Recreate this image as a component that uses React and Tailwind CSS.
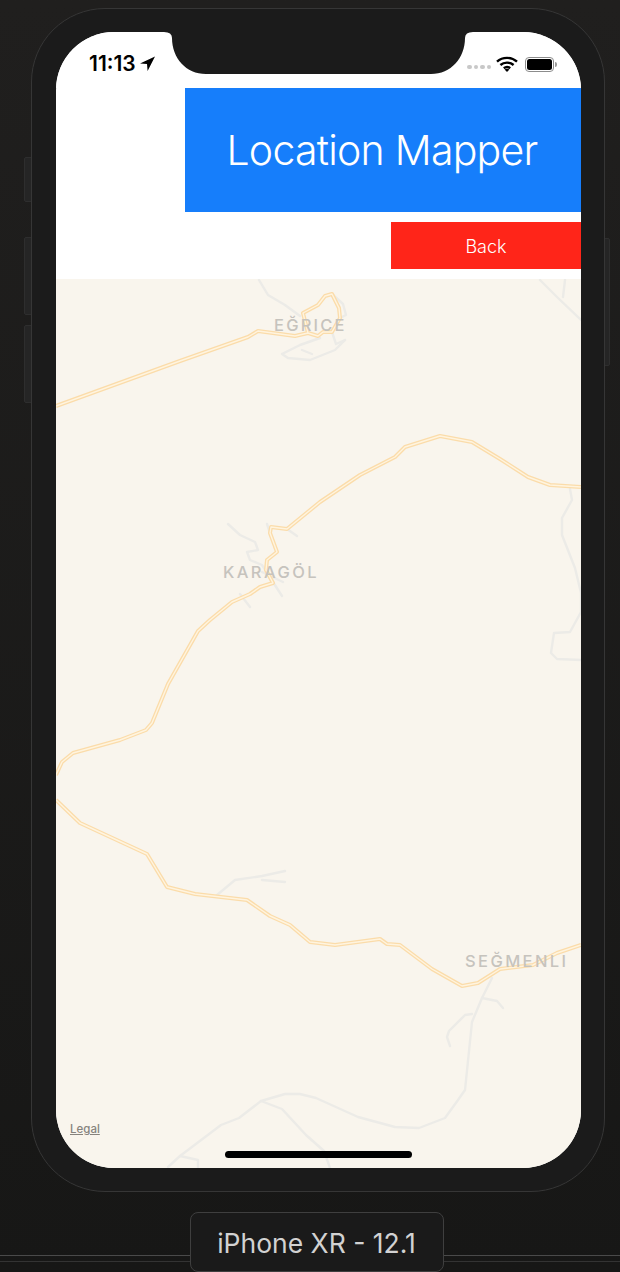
import React from 'react';

const font = { fontFamily: 'Inter, "Noto Sans", sans-serif' };

const mainRoads = [
  'M56 406L180 361L248 337L258 331L295 336L308 333L318 336L323 332L332 332L340 318L339 308L332 294L325 296L318 305L303 313L308 333',
  'M581 487L550 485L528 477L500 459L472 442L440 436L405 447L395 457L360 475L320 502L287 529L271 527L270 533L277 552L267 560L266 570L273 583L260 587L250 594L232 602L210 620L198 631L168 684L152 723L146 730L120 740L73 753L62 762L56 775',
  'M56 800L80 823L147 854L167 887L195 894L247 900L270 916L290 925L310 942L335 945L380 939L387 944L400 945L432 969L462 986L478 983L500 969L533 965L557 953L581 945',
];

const minorRoads = [
  'M259 280L268 295L285 305L300 316',
  'M332 294L343 304L346 315L340 318',
  'M332 332L336 344L345 340',
  'M282 354L300 345L320 338M282 354L288 358L310 360L335 350L345 340M302 350L312 354',
  'M228 524L240 535L255 542L258 550L247 552L250 560L262 565L282 596',
  'M267 524L270 533M287 529L297 536',
  'M240 594L250 607M262 572L283 582',
  'M492 978L482 998L472 1022L465 1090L458 1100L445 1118L419 1128L395 1127L358 1117L316 1098L300 1094L285 1094L261 1101L239 1118L221 1125L180 1156L168 1167',
  'M180 1156L198 1160L198 1168',
  'M261 1101L282 1109L306 1135L324 1151L330 1168',
  'M482 998L497 1001L503 1008',
  'M472 1014L465 1015L449 1031L447 1037L450 1046',
  'M570 489L572 500L562 518L562 535L575 568L581 593L581 612L570 632L554 633L551 653L557 659L581 660',
  'M540 280L557 297L581 320',
  'M565 280L563 297',
  'M217 895L235 880L262 876L285 871M262 880L285 882',
];

function MapCanvas() {
  return (
    <svg className="absolute inset-0 h-full w-full" viewBox="56 279 525 889" fill="none">
      {minorRoads.map((d) => (
        <path key={d} d={d} stroke="#ecebe7" strokeWidth="2.4" strokeLinejoin="round" strokeLinecap="round" />
      ))}
      {mainRoads.map((d) => (
        <path key={d} d={d} stroke="#fbdcaa" strokeWidth="4" strokeLinejoin="round" />
      ))}
      {mainRoads.map((d) => (
        <path key={d + 'inner'} d={d} stroke="#fff4df" strokeWidth="1.4" strokeLinejoin="round" />
      ))}
    </svg>
  );
}

function StatusBar() {
  return (
    <div className="relative h-[56px] shrink-0 bg-white">
      <div className="flex items-start justify-between pl-[33px] pr-[24px] pt-[20px]">
        <div className="flex items-center gap-[4px] text-black">
          <span className="mt-[1px] text-[21px] font-semibold leading-[22px]">11:13</span>
          <svg width="15" height="15" viewBox="0 0 15 15">
            <path d="M15 .5L0 7.4L7 8L7.6 15Z" fill="#000" />
          </svg>
        </div>
        <div className="flex items-center pt-[4px]">
          <div className="mr-[5px] mt-[6px] flex gap-[2px]">
            <div className="size-[4.5px] rounded-full bg-[#c8c8c8]" />
            <div className="size-[4.5px] rounded-full bg-[#c8c8c8]" />
            <div className="size-[4.5px] rounded-full bg-[#c8c8c8]" />
            <div className="size-[4.5px] rounded-full bg-[#c8c8c8]" />
          </div>
          <svg width="22" height="16" viewBox="0 0 22 16" fill="none" stroke="#000" strokeWidth="2.4">
            <path d="M1 5.6C6.6 .6 15.4 .6 21 5.6" />
            <path d="M4.4 9C8 5.8 14 5.8 17.6 9" />
            <path d="M7.8 12.2C9.6 10.8 12.4 10.8 14.2 12.2" />
            <path d="M11 16L8.6 13.6C10 12.6 12 12.6 13.4 13.6Z" fill="#000" stroke="none" />
          </svg>
          <div className="ml-[7px] flex items-center">
            <div className="flex h-[15px] w-[29px] items-center justify-center rounded-[4px] border border-[#8c8c8c] p-[1px]">
              <div className="h-full w-full rounded-[2.5px] bg-black" />
            </div>
            <div className="ml-[1px] h-[5px] w-[2px] rounded-r-full bg-[#9a9a9a]" />
          </div>
        </div>
      </div>
    </div>
  );
}

export default function App() {
  return (
    <div
      className="relative h-[1272px] w-[620px] overflow-hidden bg-linear-to-b from-[#201f1e] to-[#171716] pl-[31px] pt-[8px]"
      style={font}
    >
      <div className="absolute inset-x-0 top-[1255px] h-[1px] bg-[#4a4a4a]" />
      <div className="absolute inset-x-0 top-[1261px] h-[1px] bg-[#333333]" />

      <div className="absolute left-[24px] top-[157px] h-[45px] w-[8px] rounded-l-[2px] border border-[#2e2e2e] bg-[#252525]" />
      <div className="absolute left-[24px] top-[237px] h-[78px] w-[8px] rounded-l-[2px] border border-[#2e2e2e] bg-[#252525]" />
      <div className="absolute left-[24px] top-[325px] h-[78px] w-[8px] rounded-l-[2px] border border-[#2e2e2e] bg-[#252525]" />
      <div className="absolute left-[602px] top-[238px] h-[128px] w-[8px] rounded-r-[2px] border border-[#2e2e2e] bg-[#252525]" />

      <div className="relative h-[1184px] w-[574px] rounded-[74px] border border-[#363636] bg-[#1b1b1b] pl-[24px] pt-[23px]">
        <div className="relative flex h-[1136px] w-[525px] flex-col overflow-hidden rounded-[58px] bg-white">
          <StatusBar />

          <div className="flex h-[124px] shrink-0 justify-end">
            <div className="flex w-[396px] items-center justify-center bg-[#167efb] pr-[2px]">
              <span className="text-[41px] font-light leading-none tracking-[-0.75px] text-white">Location Mapper</span>
            </div>
          </div>

          <div className="mt-[10px] flex h-[47px] shrink-0 justify-end">
            <div className="flex w-[190px] items-center justify-center bg-[#ff2519] pt-[2px]">
              <span className="text-[18px] font-light text-white">Back</span>
            </div>
          </div>

          <div className="relative mt-[10px] flex-1 bg-[#f9f5ed]">
            <MapCanvas />
            <span className="absolute left-[218px] top-[37px] text-[16.5px] font-medium leading-[18px] tracking-[2.2px] text-[#c6c3bd]">EĞRICE</span>
            <span className="absolute left-[167px] top-[284px] text-[16.5px] font-medium leading-[18px] tracking-[2.4px] text-[#c6c3bd]">KARAGÖL</span>
            <span className="absolute left-[409px] top-[673px] text-[16.5px] font-medium leading-[18px] tracking-[2.4px] text-[#c6c3bd]">SEĞMENLI</span>
            <span className="absolute left-[14px] top-[844px] text-[11.5px] font-medium leading-[13px] text-[#86837d] underline">Legal</span>
            <div className="absolute bottom-[10px] left-[169px] h-[7px] w-[187px] rounded-full bg-black" />
          </div>

          <svg className="absolute left-[108px] top-0" width="309" height="42" viewBox="0 0 309 42">
            <path d="M0 0Q8 0 8 6C8 26 22 42 42 42H267C287 42 301 26 301 6Q301 0 309 0Z" fill="#1b1b1b" />
          </svg>
        </div>
      </div>

      <div className="mx-auto mt-[20px] flex h-[60px] w-[254px] -translate-x-[9px] items-center justify-center rounded-[8px] border border-[#3f3f3f] bg-[#1a1a1a] pt-[3px]">
        <span className="text-[26.5px] font-normal leading-none text-[#d2d2d2]">iPhone XR - 12.1</span>
      </div>
    </div>
  );
}
